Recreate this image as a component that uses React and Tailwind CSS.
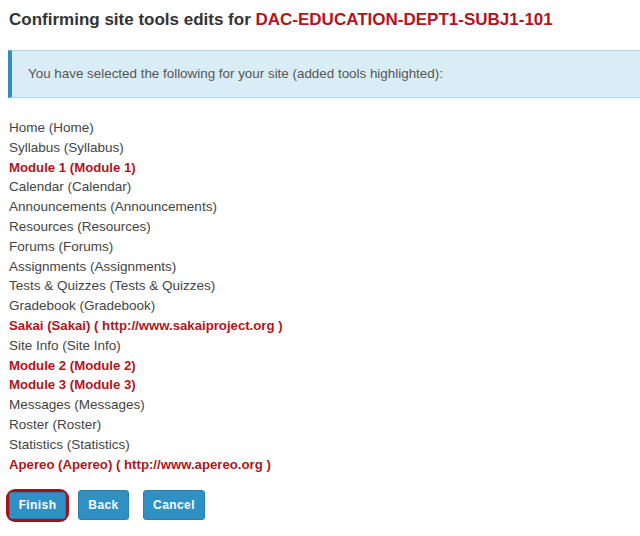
export default function App() {
  const items = [
    ["Home (Home)", false],
    ["Syllabus (Syllabus)", false],
    ["Module 1 (Module 1)", true],
    ["Calendar (Calendar)", false],
    ["Announcements (Announcements)", false],
    ["Resources (Resources)", false],
    ["Forums (Forums)", false],
    ["Assignments (Assignments)", false],
    ["Tests & Quizzes (Tests & Quizzes)", false],
    ["Gradebook (Gradebook)", false],
    ["Sakai (Sakai) ( http://www.sakaiproject.org )", true],
    ["Site Info (Site Info)", false],
    ["Module 2 (Module 2)", true],
    ["Module 3 (Module 3)", true],
    ["Messages (Messages)", false],
    ["Roster (Roster)", false],
    ["Statistics (Statistics)", false],
    ["Apereo (Apereo) ( http://www.apereo.org )", true],
  ];
  return (
    <div className="w-[640px] h-[536px] bg-white overflow-hidden font-['Liberation_Sans',Arial,sans-serif] text-[#333]">
      <h1 className="pl-[9px] pt-[8px] text-[17px] leading-[23px] font-bold text-[#333]">
        Confirming site tools edits for <span className="text-[#b3141c]">DAC-EDUCATION-DEPT1-SUBJ1-101</span>
      </h1>
      <div className="ml-[8px] mt-[19px] h-[48px] bg-[#d9edf7] border-y border-[#a9d4ea] border-l-4 border-l-[#2f8fc1] flex items-center pl-[16px] text-[13.4px] text-[#555]">
        You have selected the following for your site (added tools highlighted):
      </div>
      <ul className="pl-[9px] pt-[20px] leading-[19.8px]">
        {items.map(([t, hi], i) => (
          <li key={i} className={hi ? "font-bold text-[13.2px] text-[#b3141c]" : "text-[13.5px] text-[#444]"}>{t}</li>
        ))}
      </ul>
      <div className="flex items-center pl-[9px] mt-[16px]">
        <div className="rounded-[6px] ring-[3px] ring-[#a3121a] shadow-[0_1px_3px_rgba(0,0,0,0.4)]">
          <button className="h-[27px] w-[57px] bg-[#2f91c3] border border-[#2a7fae] rounded-[3px] text-white font-bold text-[12px] tracking-[0.4px]">Finish</button>
        </div>
        <button className="h-[30px] w-[51px] ml-[12px] bg-[#2f91c3] border border-[#2a7fae] rounded-[3px] text-white font-bold text-[12px] tracking-[0.4px]">Back</button>
        <button className="h-[30px] w-[62px] ml-[14px] bg-[#2f91c3] border border-[#2a7fae] rounded-[3px] text-white font-bold text-[12px] tracking-[0.4px]">Cancel</button>
      </div>
    </div>
  );
}
